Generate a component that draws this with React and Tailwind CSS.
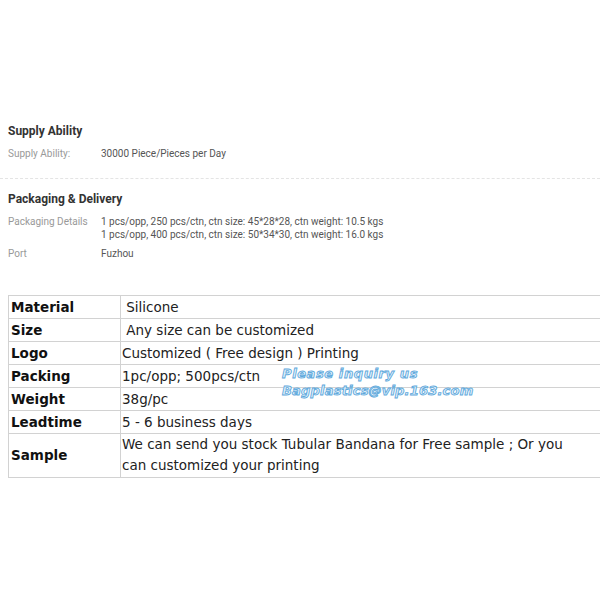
import React from "react";

const rows = [
  { label: "Material", value: "\u00a0Silicone" },
  { label: "Size", value: "\u00a0Any size can be customized" },
  { label: "Logo", value: "Customized ( Free design ) Printing" },
  { label: "Packing", value: "1pc/opp; 500pcs/ctn" },
  { label: "Weight", value: "38g/pc" },
  { label: "Leadtime", value: "5 - 6 business days" },
];

function App() {
  return (
    <div className="w-[600px] h-[600px] overflow-hidden bg-white relative">
      {/* product attributes */}
      <section className="pt-[124px] font-['Roboto',sans-serif]">
        <div className="px-2">
          <h3 className="text-[12px] leading-[15px] font-bold text-[#333]">Supply Ability</h3>
          <div className="flex mt-[8px] text-[10px] leading-[13px]">
            <div className="w-[93px] text-[#999]">Supply Ability:</div>
            <div className="text-[#555]">30000 Piece/Pieces per Day</div>
          </div>
        </div>
        <div className="mt-[18px] border-t border-dashed border-[#e4e4e4]" />
        <div className="px-2 pt-[13px]">
          <h3 className="text-[12px] leading-[15px] font-bold text-[#333]">Packaging &amp; Delivery</h3>
          <div className="flex mt-[8px] text-[10px] leading-[13px]">
            <div className="w-[93px] text-[#999]">Packaging Details</div>
            <div className="text-[#555]">
              <div>1 pcs/opp, 250 pcs/ctn, ctn size: 45*28*28, ctn weight: 10.5 kgs</div>
              <div>1 pcs/opp, 400 pcs/ctn, ctn size: 50*34*30, ctn weight: 16.0 kgs</div>
            </div>
          </div>
          <div className="flex mt-[6px] text-[10px] leading-[13px]">
            <div className="w-[93px] text-[#999]">Port</div>
            <div className="text-[#555]">Fuzhou</div>
          </div>
        </div>
      </section>

      {/* spec table */}
      <div className="mt-[35px] ml-2 w-[612px] border-t border-l border-[#d2d2d2] font-['DejaVu_Sans',Verdana,sans-serif] text-[13.5px] text-[#222]">
        {rows.map((r) => (
          <div key={r.label} className="grid grid-cols-[112px_1fr] h-[23px] border-b border-[#d2d2d2]">
            <div className="pl-[2px] font-bold text-[#111] leading-[22px] border-r border-[#d2d2d2]">{r.label}</div>
            <div className="pl-[1px] leading-[22px] whitespace-nowrap">{r.value}</div>
          </div>
        ))}
        <div className="grid grid-cols-[112px_1fr] h-[44px] border-b border-[#d2d2d2]">
          <div className="pl-[2px] font-bold text-[#111] flex items-center border-r border-[#d2d2d2]">Sample</div>
          <div className="pl-[1px] pr-[30px] leading-[21px]">
            We can send you stock Tubular Bandana for Free sample ; Or you can customized your printing
          </div>
        </div>
      </div>

      {/* watermark */}
      <div className="absolute left-[282px] top-[365px] italic font-bold font-['DejaVu_Sans',sans-serif] leading-[17px] text-[13px] [color:#e3f1fb] [-webkit-text-stroke:0.9px_#5fa9dc]">
        <div className="tracking-[0.6px]">Please inquiry us</div>
        <div className="tracking-[0.2px]">Bagplastics@vip.163.com</div>
      </div>
    </div>
  );
}

export default App;
